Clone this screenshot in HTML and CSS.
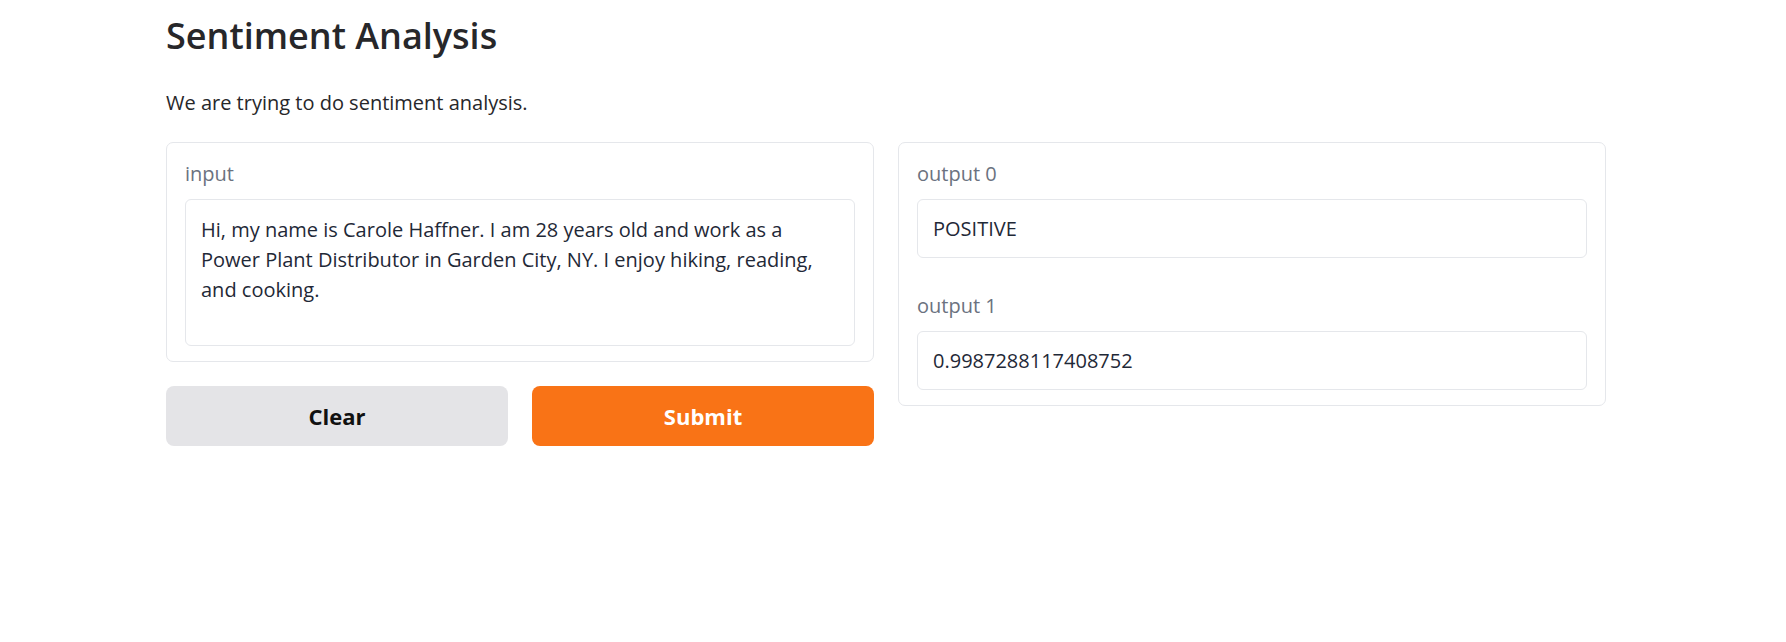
FILE: index.html
```html
<!DOCTYPE html>
<html lang="en">
<head>
<meta charset="utf-8">
<title>Sentiment Analysis</title>
<link rel="stylesheet" href="styles.css">
</head>
<body>
<div class="app">
  <h1 class="title">Sentiment Analysis</h1>
  <p class="desc">We are trying to do sentiment analysis.</p>
  <div class="row">
    <div class="col">
      <div class="card">
        <div class="field">
          <label class="label">input</label>
          <div class="textarea">Hi, my name is Carole Haffner. I am 28 years old and work as a Power Plant Distributor in Garden City, NY. I enjoy hiking, reading, and cooking.</div>
        </div>
      </div>
      <div class="buttons">
        <button class="btn btn-clear">Clear</button>
        <button class="btn btn-submit">Submit</button>
      </div>
    </div>
    <div class="col">
      <div class="card card-out">
        <div class="field">
          <label class="label">output 0</label>
          <div class="outbox">POSITIVE</div>
        </div>
        <div class="field">
          <label class="label">output 1</label>
          <div class="outbox">0.9987288117408752</div>
        </div>
      </div>
    </div>
  </div>
</div>
</body>
</html>
```

FILE: styles.css
```css
* { box-sizing: border-box; }

body {
  margin: 0;
  background: #ffffff;
  font-family: "Open Sans", "Noto Sans", sans-serif;
  color: #27272a;
}

.app {
  width: 1440px;
  margin-left: 166px;
  padding-top: 14px;
}

.title {
  margin: 0 0 33px 0;
  font-size: 36px;
  line-height: 44px;
  font-weight: 600;
  color: #27272a;
}

.desc {
  margin: 0 0 27px 0;
  font-size: 20px;
  line-height: 24px;
  color: #27272a;
}

.row {
  display: grid;
  grid-template-columns: 708px 708px;
  gap: 24px;
  align-items: start;
}

.col {
  display: flex;
  flex-direction: column;
  gap: 24px;
}

.card {
  border: 1px solid #e5e7eb;
  border-radius: 7px;
  padding: 19px 18px 15px 18px;
  display: flex;
  flex-direction: column;
  gap: 36px;
}

.field {
  display: flex;
  flex-direction: column;
}

.label {
  font-size: 20px;
  line-height: 24px;
  color: #6b7280;
  margin-bottom: 13px;
}

.textarea {
  height: 147px;
  border: 1px solid #e5e7eb;
  border-radius: 6px;
  padding: 15px 15px 10px 15px;
  font-size: 20px;
  line-height: 30px;
  color: #1f2937;
}

.outbox {
  height: 59px;
  border: 1px solid #e5e7eb;
  border-radius: 6px;
  padding: 0 15px;
  font-size: 20px;
  line-height: 57px;
  color: #1f2937;
}

.buttons {
  display: grid;
  grid-template-columns: 1fr 1fr;
  gap: 24px;
}

.btn {
  height: 60px;
  border: none;
  border-radius: 8px;
  font-family: "Open Sans", "Noto Sans", sans-serif;
  font-size: 22px;
  font-weight: 700;
  cursor: pointer;
}

.btn-clear {
  background: #e4e4e7;
  color: #111111;
}

.btn-submit {
  background: #f97316;
  color: #ffffff;
}
```
